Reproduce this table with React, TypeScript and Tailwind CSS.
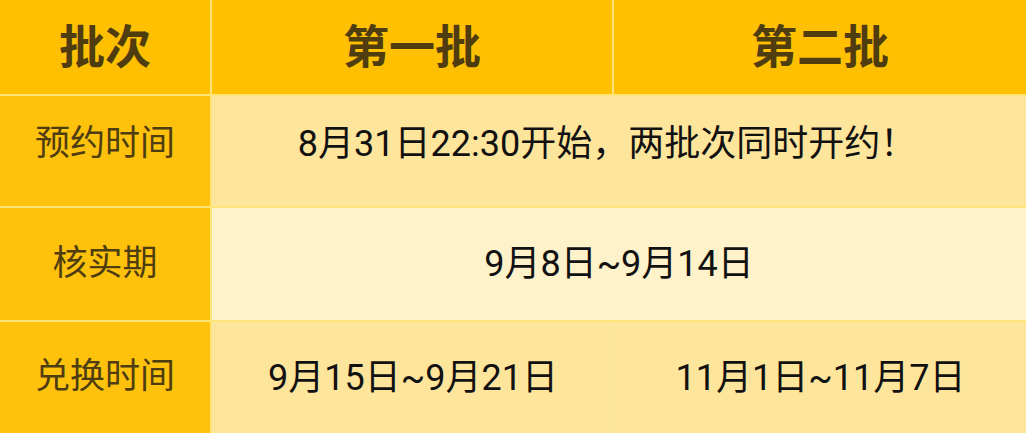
const font = { fontFamily: 'Roboto, "Noto Sans CJK SC", sans-serif' };

const head = "flex items-center justify-center bg-[#FFC002] text-[46px] font-semibold text-[#4f3d10]";
const label = "flex items-center justify-center bg-[#FEC10C] text-[35px] text-[#4f3d12]";
const cell = "flex items-center justify-center text-[36px] text-[#111]";

export default function App() {
  return (
    <div
      className="grid h-[433px] w-[1026px] grid-cols-[210px_400px_1fr] grid-rows-[94px_110px_112px_1fr] gap-[2px] bg-[#FFE47A]"
      style={font}
    >
      <div className={head}>批次</div>
      <div className={head}>第一批</div>
      <div className={head}>第二批</div>

      <div className={`${label} pb-[14px]`}>预约时间</div>
      <div className={`${cell} col-span-2 bg-[#FEE59C] pr-[24px] pb-[14px]`}>8月31日22:30开始，两批次同时开约！</div>

      <div className={label}>核实期</div>
      <div className={`${cell} col-span-2 bg-[#FEF2CA]`}>9月8日~9月14日</div>

      <div className={label}>兑换时间</div>
      <div className="col-span-2 grid grid-cols-[402px_1fr] bg-[#FEE59C]">
        <div className={cell}>9月15日~9月21日</div>
        <div className={`${cell} border-l border-[#FEE8A8]`}>11月1日~11月7日</div>
      </div>
    </div>
  );
}
